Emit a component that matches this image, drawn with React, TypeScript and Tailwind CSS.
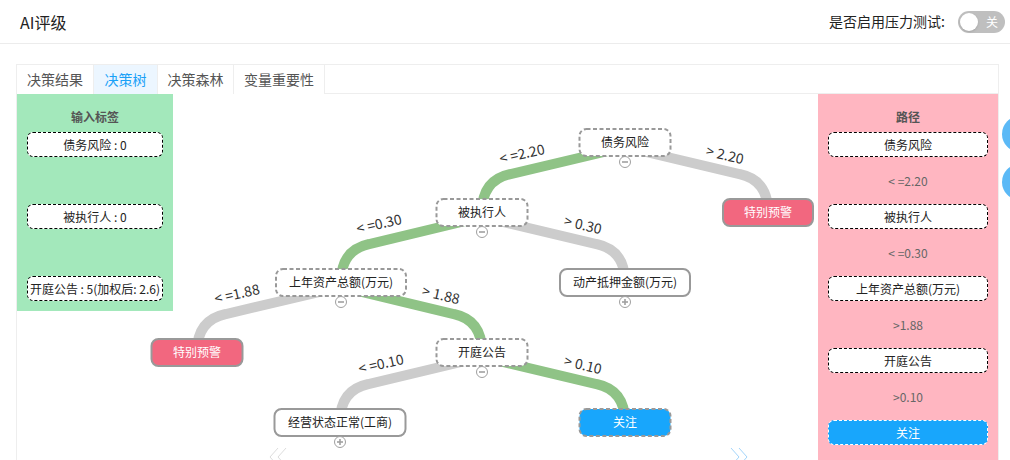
import React from 'react';

type Node = {
  label: string;
  x: number;
  y: number;
  w: number;
  kind: 'dashed' | 'solid' | 'warn' | 'focus';
  toggle?: 'minus' | 'plus';
};

const GREEN = '#8fc386';
const GRAY = '#cccccc';

const nodes: Node[] = [
  { label: '债务风险', x: 625, y: 143, w: 91, kind: 'dashed', toggle: 'minus' },
  { label: '特别预警', x: 768, y: 213, w: 90, kind: 'warn' },
  { label: '被执行人', x: 482, y: 213, w: 91, kind: 'dashed', toggle: 'minus' },
  { label: '动产抵押金额(万元)', x: 625, y: 283, w: 130, kind: 'solid', toggle: 'plus' },
  { label: '上年资产总额(万元)', x: 341, y: 283, w: 130, kind: 'dashed', toggle: 'minus' },
  { label: '特别预警', x: 197, y: 353, w: 91, kind: 'warn' },
  { label: '开庭公告', x: 482, y: 353, w: 91, kind: 'dashed', toggle: 'minus' },
  { label: '经营状态正常(工商)', x: 340, y: 423, w: 131, kind: 'solid', toggle: 'plus' },
  { label: '关注', x: 625, y: 423, w: 91, kind: 'focus' },
];

const edges = [
  { from: [625, 143], to: [482, 213], on: true, text: '< =2.20', tx: 522, ty: 155, left: true },
  { from: [625, 143], to: [768, 213], on: false, text: '> 2.20', tx: 725, ty: 156, left: false },
  { from: [482, 213], to: [341, 283], on: true, text: '< =0.30', tx: 379, ty: 225, left: true },
  { from: [482, 213], to: [625, 283], on: false, text: '> 0.30', tx: 583, ty: 226, left: false },
  { from: [341, 283], to: [197, 353], on: false, text: '< =1.88', tx: 237, ty: 295, left: true },
  { from: [341, 283], to: [482, 353], on: true, text: '> 1.88', tx: 441, ty: 296, left: false },
  { from: [482, 353], to: [340, 423], on: false, text: '< =0.10', tx: 381, ty: 365, left: true },
  { from: [482, 353], to: [625, 423], on: true, text: '> 0.10', tx: 583, ty: 366, left: false },
];

const FONT = '"Noto Sans CJK SC", "Liberation Sans", sans-serif';

// straight slanted run from the parent, then a tight bend down into the child
function linkPath(from: number[], to: number[]) {
  const dx = to[0] - from[0];
  const sy = from[1] + 5;
  const bx = from[0] + dx * 0.8;
  const by = sy + 27;
  const cy = sy + 33;
  return `M ${from[0]} ${sy} L ${bx} ${by} Q ${to[0]} ${cy} ${to[0]} ${to[1]}`;
}

function TreeNode({ n }: { n: Node }) {
  const h = 27;
  const left = n.x - n.w / 2;
  const top = n.y - 13;
  let fill = '#ffffff';
  const stroke = '#999999';
  let dash: string | undefined = '4 2.5';
  let color = '#222222';
  if (n.kind === 'solid') dash = undefined;
  if (n.kind === 'warn') {
    fill = '#f2677f';
    dash = undefined;
    color = '#ffffff';
  }
  if (n.kind === 'focus') {
    fill = '#18a6fc';
    color = '#ffffff';
  }
  return (
    <g>
      <rect
        x={left}
        y={top}
        width={n.w}
        height={h}
        rx={7}
        fill={fill}
        stroke={stroke}
        strokeWidth={2}
        strokeDasharray={dash}
      />
      <text
        x={n.x}
        y={n.y + 4.5}
        textAnchor="middle"
        fontSize={12}
        fill={color}
        fontFamily={FONT}
      >
        {n.label}
      </text>
      {n.toggle && (
        <g>
          <circle cx={n.x} cy={n.y + 20} r={5.5} fill="#fff" stroke="#a0a0a0" strokeWidth={1} />
          <line x1={n.x - 3} y1={n.y + 20} x2={n.x + 3} y2={n.y + 20} stroke="#a0a0a0" strokeWidth={1.6} />
          {n.toggle === 'plus' && (
            <line x1={n.x} y1={n.y + 17} x2={n.x} y2={n.y + 23} stroke="#a0a0a0" strokeWidth={1.6} />
          )}
        </g>
      )}
    </g>
  );
}

function Tree() {
  return (
    <svg width={645} height={365} className="block overflow-visible">
      <g transform="translate(-173,-95)">
        {edges.map((e, i) => (
          <path
            key={i}
            d={linkPath(e.from, e.to)}
            fill="none"
            stroke={e.on ? GREEN : GRAY}
            strokeWidth={10}
          />
        ))}
        {edges.map((e, i) => (
          <text
            key={'t' + i}
            x={e.tx}
            y={e.ty + 5}
            textAnchor="middle"
            fontSize={14}
            fill="#333"
            fontFamily={FONT}
            transform={`rotate(${e.left ? -13 : 13} ${e.tx} ${e.ty})`}
          >
            {e.text}
          </text>
        ))}
        {nodes.map((n, i) => (
          <TreeNode key={i} n={n} />
        ))}
        <path d="M 278 449 L 270 458 L 278 467 M 286 449 L 278 458 L 286 467" stroke="#dddddd" strokeWidth={1} fill="none" />
        <path d="M 731 449 L 739 458 L 731 467 M 739 449 L 747 458 L 739 467" stroke="#a3d5fb" strokeWidth={1} fill="none" />
      </g>
    </svg>
  );
}

export default function App() {
  const tabs = [
    { name: '决策结果', w: 'w-[77px]' },
    { name: '决策树', w: 'w-[64px]' },
    { name: '决策森林', w: 'w-[76px]' },
    { name: '变量重要性', w: 'w-[91px]' },
  ];
  const inputs = ['债务风险 : 0', '被执行人 : 0', '开庭公告 : 5(加权后: 2.6)'];
  const path = [
    { box: '债务风险', cond: '< =2.20' },
    { box: '被执行人', cond: '< =0.30' },
    { box: '上年资产总额(万元)', cond: '>1.88' },
    { box: '开庭公告', cond: '>0.10' },
  ];

  return (
    <div
      className="relative w-[1010px] h-[460px] overflow-hidden bg-white text-[#222]"
      style={{ fontFamily: FONT }}
    >
      <div className="h-[44px] flex items-center justify-between pl-[20px] pr-[5px] border-b border-[#ececec]">
        <div className="text-[16px]">AI评级</div>
        <div className="flex items-center gap-[13px]">
          <span className="text-[14px]">是否启用压力测试:</span>
          <div className="w-[47px] h-[22px] rounded-full bg-[#bfbfbf] flex items-center justify-between pl-[2px] pr-[7px]">
            <div className="w-[18px] h-[18px] rounded-full bg-white shadow" />
            <span className="text-[12px] text-white">关</span>
          </div>
        </div>
      </div>

      <div className="ml-[16px] mt-[20px] w-[983px] border border-[#eeeeee]">
        <div className="flex h-[29px]">
          {tabs.map((t, i) => (
            <div
              key={t.name}
              className={`${t.w} flex items-center justify-center text-[14px] border-r border-[#eeeeee] ${
                i === 1 ? 'bg-[#ecf6ff] text-[#1aa1f7]' : 'text-[#555]'
              }`}
            >
              {t.name}
            </div>
          ))}
          <div className="flex-1 border-b border-[#eeeeee]" />
        </div>

        <div className="flex items-start">
          <div className="relative z-10 w-[156px] h-[217px] bg-[#a3e8bb] flex flex-col items-center pt-[14px] px-[10px]">
            <div className="text-[12px] font-bold text-[#555] leading-[18px]">输入标签</div>
            <div className="flex flex-col gap-[47px] mt-[6px] w-full">
              {inputs.map((t) => (
                <div
                  key={t}
                  className="h-[25px] w-full bg-white border border-dashed border-black rounded-[6px] flex items-center justify-center text-[12px] whitespace-nowrap"
                >
                  {t}
                </div>
              ))}
            </div>
          </div>

          <div className="flex-1">
            <Tree />
          </div>

          <div className="w-[180px] h-[380px] bg-[#ffb6c1] flex flex-col items-center pt-[14px] px-[10px]">
            <div className="text-[12px] font-bold text-[#555] leading-[18px]">路径</div>
            <div className="flex flex-col w-full mt-[6px]">
              {path.map((p) => (
                <div key={p.box} className="flex flex-col w-full">
                  <div className="h-[25px] w-full bg-white border border-dashed border-black rounded-[6px] flex items-center justify-center text-[12px]">
                    {p.box}
                  </div>
                  <div className="h-[47px] flex items-center justify-center text-[12px] text-[#666]">
                    {p.cond}
                  </div>
                </div>
              ))}
              <div className="h-[25px] w-full bg-[#18a6fc] border border-dashed border-white rounded-[6px] flex items-center justify-center text-[12px] text-white">
                关注
              </div>
            </div>
          </div>
        </div>
      </div>

      <div className="absolute left-[1002px] top-[116px] w-[36px] h-[36px] rounded-full bg-[#5bb9f6]" />
      <div className="absolute left-[1002px] top-[164px] w-[36px] h-[36px] rounded-full bg-[#5bb9f6]" />
    </div>
  );
}
